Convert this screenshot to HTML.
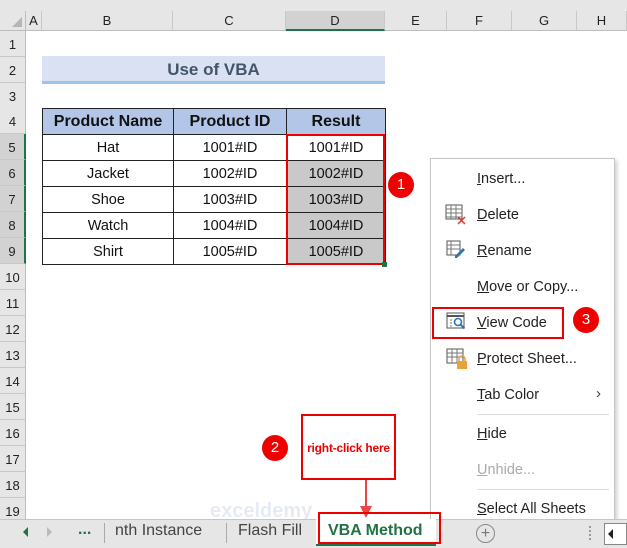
<!DOCTYPE html>
<html><head><style>
*{margin:0;padding:0;box-sizing:border-box}
body{width:627px;height:548px;position:relative;overflow:hidden;background:#fff;font-family:"Liberation Sans",Calibri,sans-serif;}
.a{position:absolute}
.ch{position:absolute;top:11px;height:20px;border-right:1px solid #c8c8c8;background:#e6e6e6;font-size:13px;text-align:center;line-height:20px;color:#222;border-bottom:1px solid #bdbdbd}
.rh{position:absolute;left:0;width:26px;height:26px;background:#e6e6e6;border-bottom:1px solid #c8c8c8;border-right:1px solid #bdbdbd;font-size:13px;line-height:28px;text-align:center;color:#222}
table{position:absolute;left:42px;top:108px;border-collapse:collapse}
td{border:1px solid #222;height:26px;text-align:center;font-size:14.5px;color:#111;padding:0}
th{border:1px solid #222;height:26px;background:#b4c6e7;font-size:16px;font-weight:bold;color:#111}
.g{background:#c9c9c9}
.mi{position:absolute;left:477px;font-size:14.5px;color:#222}
.circ{position:absolute;width:26px;height:26px;border-radius:50%;background:#e00;color:#fff;font-size:15px;text-align:center;line-height:26px}
</style></head><body>
<div class="a" style="left:0;top:0;width:627px;height:11px;background:#e6e6e6"></div>
<div class="a" style="left:0;top:11px;width:26px;height:20px;background:#e6e6e6;border-right:1px solid #bdbdbd;border-bottom:1px solid #bdbdbd"></div>
<div class="a" style="left:12px;top:17px;width:0;height:0;border-left:10px solid transparent;border-bottom:10px solid #b5b5b5"></div>
<div class="ch" style="left:26px;width:16px">A</div>
<div class="ch" style="left:42px;width:131px">B</div>
<div class="ch" style="left:173px;width:113px">C</div>
<div class="ch" style="left:286px;width:99px;background:#d2d2d2;border-bottom:2px solid #217346">D</div>
<div class="ch" style="left:385px;width:62px">E</div>
<div class="ch" style="left:447px;width:65px">F</div>
<div class="ch" style="left:512px;width:65px">G</div>
<div class="ch" style="left:577px;width:50px">H</div>

<div class="rh" style="top:31px">1</div>
<div class="rh" style="top:57px">2</div>
<div class="rh" style="top:83px">3</div>
<div class="rh" style="top:108px">4</div>
<div class="rh" style="top:134px;background:#d2d2d2;border-right:2px solid #217346">5</div>
<div class="rh" style="top:160px;background:#d2d2d2;border-right:2px solid #217346">6</div>
<div class="rh" style="top:186px;background:#d2d2d2;border-right:2px solid #217346">7</div>
<div class="rh" style="top:212px;background:#d2d2d2;border-right:2px solid #217346">8</div>
<div class="rh" style="top:238px;background:#d2d2d2;border-right:2px solid #217346">9</div>
<div class="rh" style="top:264px">10</div>
<div class="rh" style="top:290px">11</div>
<div class="rh" style="top:316px">12</div>
<div class="rh" style="top:342px">13</div>
<div class="rh" style="top:368px">14</div>
<div class="rh" style="top:394px">15</div>
<div class="rh" style="top:420px">16</div>
<div class="rh" style="top:446px">17</div>
<div class="rh" style="top:472px">18</div>
<div class="rh" style="top:498px">19</div>

<div class="a" style="left:42px;top:56px;width:343px;height:28px;background:#d9e1f2;border-bottom:3px solid #9dc3e6;text-align:center;font-weight:bold;font-size:17px;line-height:27px;color:#44546a">Use of VBA</div>

<table>
<tr><th style="width:131px">Product Name</th><th style="width:113px">Product ID</th><th style="width:99px">Result</th></tr>
<tr><td>Hat</td><td>1001#ID</td><td>1001#ID</td></tr>
<tr><td>Jacket</td><td>1002#ID</td><td class="g">1002#ID</td></tr>
<tr><td>Shoe</td><td>1003#ID</td><td class="g">1003#ID</td></tr>
<tr><td>Watch</td><td>1004#ID</td><td class="g">1004#ID</td></tr>
<tr><td>Shirt</td><td>1005#ID</td><td class="g">1005#ID</td></tr>
</table>
<div class="a" style="left:286px;top:134px;width:99px;height:131px;border:2px solid #e00"></div>
<div class="a" style="left:382px;top:262px;width:5px;height:5px;background:#217346"></div>
<div class="circ" style="left:388px;top:172px">1</div>

<div class="a" style="left:430px;top:158px;width:185px;height:370px;background:#fff;border:1px solid #c6c6c6;box-shadow:2px 2px 4px rgba(0,0,0,.2)"></div>
<div class="mi" style="top:171px"><u>I</u>nsert...</div>
<div class="mi" style="top:207px"><u>D</u>elete</div>
<div class="mi" style="top:243px"><u>R</u>ename</div>
<div class="mi" style="top:279px"><u>M</u>ove or Copy...</div>
<div class="mi" style="top:315px"><u>V</u>iew Code</div>
<div class="mi" style="top:351px"><u>P</u>rotect Sheet...</div>
<div class="mi" style="top:387px"><u>T</u>ab Color</div>
<div class="a" style="left:596px;top:385px;font-size:15px;color:#444">›</div>
<div class="a" style="left:477px;top:414px;width:132px;height:1px;background:#ddd"></div>
<div class="mi" style="top:426px"><u>H</u>ide</div>
<div class="mi" style="top:462px;color:#aaa"><u>U</u>nhide...</div>
<div class="a" style="left:477px;top:489px;width:132px;height:1px;background:#ddd"></div>
<div class="mi" style="top:501px"><u>S</u>elect All Sheets</div>
<svg class="a" style="left:445px;top:204px" width="22" height="22" viewBox="0 0 22 22"><rect x="1" y="1" width="16" height="14" fill="#fff" stroke="#555"/><path d="M1 5h16M1 9h16M1 13h16M6 1v14M11 1v14" stroke="#777"/><path d="M13 13l7 7M20 13l-7 7" stroke="#e33" stroke-width="1.5"/></svg>
<svg class="a" style="left:446px;top:240px" width="20" height="20" viewBox="0 0 20 20"><rect x="1" y="1" width="13" height="14" fill="#fff" stroke="#555"/><path d="M1 5h13M1 9h13M5 1v14" stroke="#777"/><path d="M9 16l8-8 2 2-8 8h-2z" fill="#2e75b6"/></svg>
<svg class="a" style="left:446px;top:312px" width="20" height="20" viewBox="0 0 20 20"><rect x="1" y="1" width="17" height="15" fill="#fff" stroke="#555"/><path d="M1 4h17" stroke="#555" stroke-width="2"/><circle cx="12" cy="10" r="3.5" fill="none" stroke="#2e75b6" stroke-width="1.6"/><path d="M14.5 12.5l4 4" stroke="#2e75b6" stroke-width="2"/><path d="M4 8h2M4 11h2M4 14h2" stroke="#777"/></svg>
<svg class="a" style="left:446px;top:348px" width="22" height="22" viewBox="0 0 22 22"><rect x="1" y="1" width="16" height="14" fill="#fff" stroke="#555"/><path d="M1 5h16M1 9h16M6 1v14M11 1v14" stroke="#777"/><path d="M13 13v-2a3 3 0 0 1 6 0v2" fill="none" stroke="#e8a23a" stroke-width="1.5"/><rect x="11" y="13" width="10" height="8" fill="#e8a23a"/></svg>
<div class="a" style="left:432px;top:307px;width:132px;height:32px;border:2px solid #e00"></div>
<div class="circ" style="left:573px;top:307px">3</div>

<div class="circ" style="left:262px;top:435px">2</div>
<div class="a" style="left:301px;top:414px;width:95px;height:66px;border:2px solid #e00;color:#e00;font-weight:bold;font-size:12px;letter-spacing:-0.2px;text-align:center;line-height:64px">right-click here</div>
<div class="a" style="left:365px;top:480px;width:2px;height:30px;background:#e44"></div>
<div class="a" style="left:360px;top:506px;width:0;height:0;border-left:6px solid transparent;border-right:6px solid transparent;border-top:12px solid #e44"></div>
<div class="a" style="left:210px;top:500px;font-size:20px;font-weight:bold;color:#9fb0d0;opacity:.25">exceldemy</div>

<div class="a" style="left:0;top:519px;width:627px;height:29px;background:#e6e6e6;border-top:1px solid #c6c6c6"></div>
<div class="a" style="left:23px;top:527px;border-top:5px solid transparent;border-bottom:5px solid transparent;border-right:5px solid #217346"></div>
<div class="a" style="left:47px;top:527px;border-top:5px solid transparent;border-bottom:5px solid transparent;border-left:5px solid #bbb"></div>
<div class="a" style="left:78px;top:521px;font-size:16px;color:#217346;font-weight:bold">...</div>
<div class="a" style="left:104px;top:523px;width:1px;height:20px;background:#aaa"></div>
<div class="a" style="left:115px;top:522px;font-size:16px;color:#444">nth Instance</div>
<div class="a" style="left:226px;top:523px;width:1px;height:20px;background:#aaa"></div>
<div class="a" style="left:238px;top:522px;font-size:16px;color:#444">Flash Fill</div>
<div class="a" style="left:316px;top:519px;width:120px;height:27px;background:#fff;border-bottom:2px solid #217346"></div>
<div class="a" style="left:318px;top:512px;width:123px;height:32px;border:2px solid #e00"></div>
<div class="a" style="left:328px;top:522px;font-size:16px;font-weight:bold;color:#217346">VBA Method</div>
<div class="a" style="left:476px;top:524px;width:19px;height:19px;border:1px solid #888;border-radius:50%;text-align:center;line-height:17px;font-size:16px;color:#777">+</div>
<div class="a" style="left:589px;top:526px;width:2px;height:14px;border-left:2px dotted #999"></div>
<div class="a" style="left:604px;top:523px;width:23px;height:22px;background:#fff;border:1px solid #888"></div>
<div class="a" style="left:608px;top:529px;border-top:5px solid transparent;border-bottom:5px solid transparent;border-right:5px solid #222"></div>
</body></html>
